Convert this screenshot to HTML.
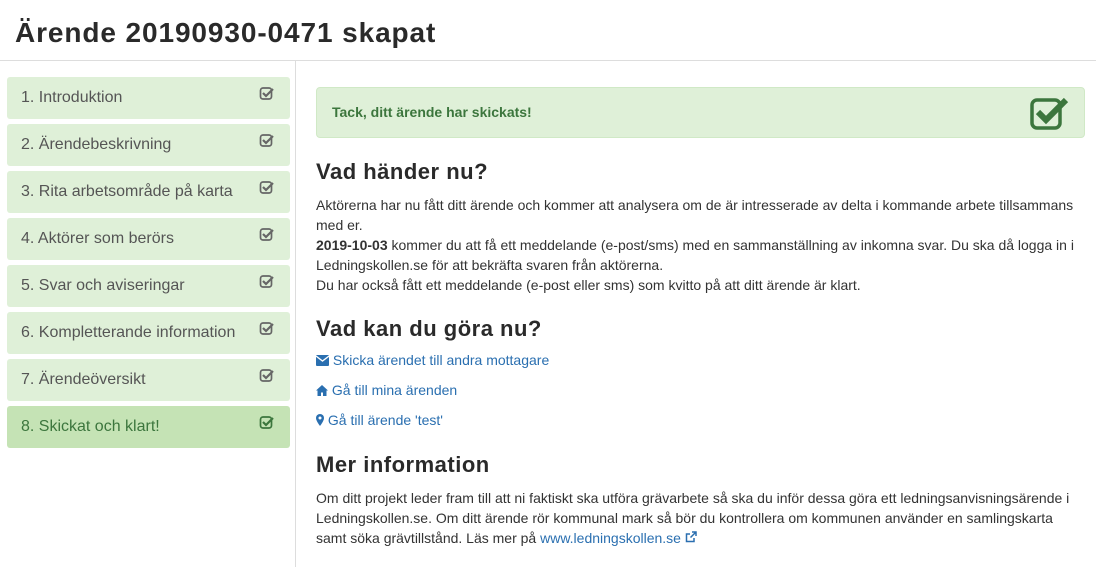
<!DOCTYPE html>
<html><head><meta charset="utf-8"><style>
body{margin:0;font-family:"Liberation Sans",Arial,sans-serif;color:#333;background:#fff;width:1096px;height:567px;overflow:hidden;position:relative}
h1{position:absolute;left:15px;top:15px;margin:0;font-size:28px;font-weight:bold;color:#2a2a2a;line-height:36px;letter-spacing:0.9px}
.hr{position:absolute;left:0;top:60px;width:1096px;height:1px;background:#ddd}
.side{position:absolute;left:295px;top:61px;width:1px;height:506px;background:#ddd}
.item{position:absolute;left:7px;width:283px;height:42px;background:#dff0d8;border-radius:3px;font-size:16px;color:#555;line-height:42px;box-sizing:border-box;padding-left:14px}
.item.act{background:#c5e3b5;color:#3c763d}
.item svg{position:absolute;right:15px;top:8px}
.alert{position:absolute;left:316px;top:87px;width:769px;height:51px;background:#dff0d8;border:1px solid #d0e9c6;border-radius:4px;box-sizing:border-box;color:#3c763d;font-weight:bold;font-size:14px;line-height:49px;padding-left:15px}
.alert svg{position:absolute;right:14px;top:8px}
.c{position:absolute;left:316px;width:770px;font-size:14px;line-height:20px}
h2{position:absolute;left:316px;margin:0;font-size:22px;font-weight:bold;color:#2a2a2a;line-height:28px;letter-spacing:0.5px}
a{color:#2a6fb0;text-decoration:none}
.l{position:absolute;left:316px;font-size:14px;color:#2a6fb0}
</style></head><body>
<h1>Ärende 20190930-0471 skapat</h1>
<div class="hr"></div><div class="side"></div>
<div class="item" style="top:77px">1. Introduktion<svg width="16" height="16" viewBox="0 0 16 16"><rect x="1.5" y="3" width="11" height="11" rx="2.5" fill="none" stroke="#666" stroke-width="1.7"/><path d="M4 8l3 3 7-7" fill="none" stroke="#666" stroke-width="2.2"/></svg></div>
<div class="item" style="top:124px">2. Ärendebeskrivning<svg width="16" height="16" viewBox="0 0 16 16"><rect x="1.5" y="3" width="11" height="11" rx="2.5" fill="none" stroke="#666" stroke-width="1.7"/><path d="M4 8l3 3 7-7" fill="none" stroke="#666" stroke-width="2.2"/></svg></div>
<div class="item" style="top:171px">3. Rita arbetsområde på karta<svg width="16" height="16" viewBox="0 0 16 16"><rect x="1.5" y="3" width="11" height="11" rx="2.5" fill="none" stroke="#666" stroke-width="1.7"/><path d="M4 8l3 3 7-7" fill="none" stroke="#666" stroke-width="2.2"/></svg></div>
<div class="item" style="top:218px">4. Aktörer som berörs<svg width="16" height="16" viewBox="0 0 16 16"><rect x="1.5" y="3" width="11" height="11" rx="2.5" fill="none" stroke="#666" stroke-width="1.7"/><path d="M4 8l3 3 7-7" fill="none" stroke="#666" stroke-width="2.2"/></svg></div>
<div class="item" style="top:265px">5. Svar och aviseringar<svg width="16" height="16" viewBox="0 0 16 16"><rect x="1.5" y="3" width="11" height="11" rx="2.5" fill="none" stroke="#666" stroke-width="1.7"/><path d="M4 8l3 3 7-7" fill="none" stroke="#666" stroke-width="2.2"/></svg></div>
<div class="item" style="top:312px">6. Kompletterande information<svg width="16" height="16" viewBox="0 0 16 16"><rect x="1.5" y="3" width="11" height="11" rx="2.5" fill="none" stroke="#666" stroke-width="1.7"/><path d="M4 8l3 3 7-7" fill="none" stroke="#666" stroke-width="2.2"/></svg></div>
<div class="item" style="top:359px">7. Ärendeöversikt<svg width="16" height="16" viewBox="0 0 16 16"><rect x="1.5" y="3" width="11" height="11" rx="2.5" fill="none" stroke="#666" stroke-width="1.7"/><path d="M4 8l3 3 7-7" fill="none" stroke="#666" stroke-width="2.2"/></svg></div>
<div class="item act" style="top:406px">8. Skickat och klart!<svg width="16" height="16" viewBox="0 0 16 16"><rect x="1.5" y="3" width="11" height="11" rx="2.5" fill="none" stroke="#3c763d" stroke-width="1.7"/><path d="M4 8l3 3 7-7" fill="none" stroke="#3c763d" stroke-width="2.2"/></svg></div>
<div class="alert">Tack, ditt ärende har skickats!<svg width="40" height="34" viewBox="0 0 40 34"><rect x="2" y="4" width="28" height="28" rx="5" fill="none" stroke="#3c763d" stroke-width="3.5"/><path d="M8 16l8 8 20-20" fill="none" stroke="#3c763d" stroke-width="6"/></svg></div>
<h2 style="top:158px">Vad händer nu?</h2>
<div class="c" style="top:195px">Aktörerna har nu fått ditt ärende och kommer att analysera om de är intresserade av delta i kommande arbete tillsammans med er.<br><b>2019-10-03</b> kommer du att få ett meddelande (e-post/sms) med en sammanställning av inkomna svar. Du ska då logga in i Ledningskollen.se för att bekräfta svaren från aktörerna.<br>Du har också fått ett meddelande (e-post eller sms) som kvitto på att ditt ärende är klart.</div>
<h2 style="top:315px">Vad kan du göra nu?</h2>
<div class="l" style="top:352px"><svg width="13" height="11" viewBox="0 0 13 11" style="vertical-align:-1px"><rect x="0" y="0" width="13" height="11" rx="1" fill="#2a6fb0"/><path d="M0 1l6.5 5 6.5-5" fill="none" stroke="#fff" stroke-width="1.3"/></svg> Skicka ärendet till andra mottagare</div>
<div class="l" style="top:382px"><svg width="12" height="11" viewBox="0 0 12 11" style="vertical-align:-1px"><path d="M6 0L0 5.5h1.5V11h3.5V7.5h2V11h3.5V5.5H12z" fill="#2a6fb0"/></svg> Gå till mina ärenden</div>
<div class="l" style="top:412px"><svg width="8" height="12" viewBox="0 0 8 12" style="vertical-align:-1px"><path d="M4 0a4 4 0 0 0-4 4c0 3 4 8 4 8s4-5 4-8a4 4 0 0 0-4-4z" fill="#2a6fb0"/><circle cx="4" cy="4" r="1.5" fill="#fff"/></svg> Gå till ärende 'test'</div>
<h2 style="top:451px">Mer information</h2>
<div class="c" style="top:488px">Om ditt projekt leder fram till att ni faktiskt ska utföra grävarbete så ska du inför dessa göra ett ledningsanvisningsärende i Ledningskollen.se. Om ditt ärende rör kommunal mark så bör du kontrollera om kommunen använder en samlingskarta samt söka grävtillstånd. Läs mer på <a>www.ledningskollen.se <svg width="12" height="12" viewBox="0 0 12 12"><path d="M9 7v3.5H1.5V3H5" fill="none" stroke="#2a6fb0" stroke-width="1.5"/><path d="M7 1h4v4M11 1L5.5 6.5" fill="none" stroke="#2a6fb0" stroke-width="1.5"/></svg></a></div>
</body></html>
